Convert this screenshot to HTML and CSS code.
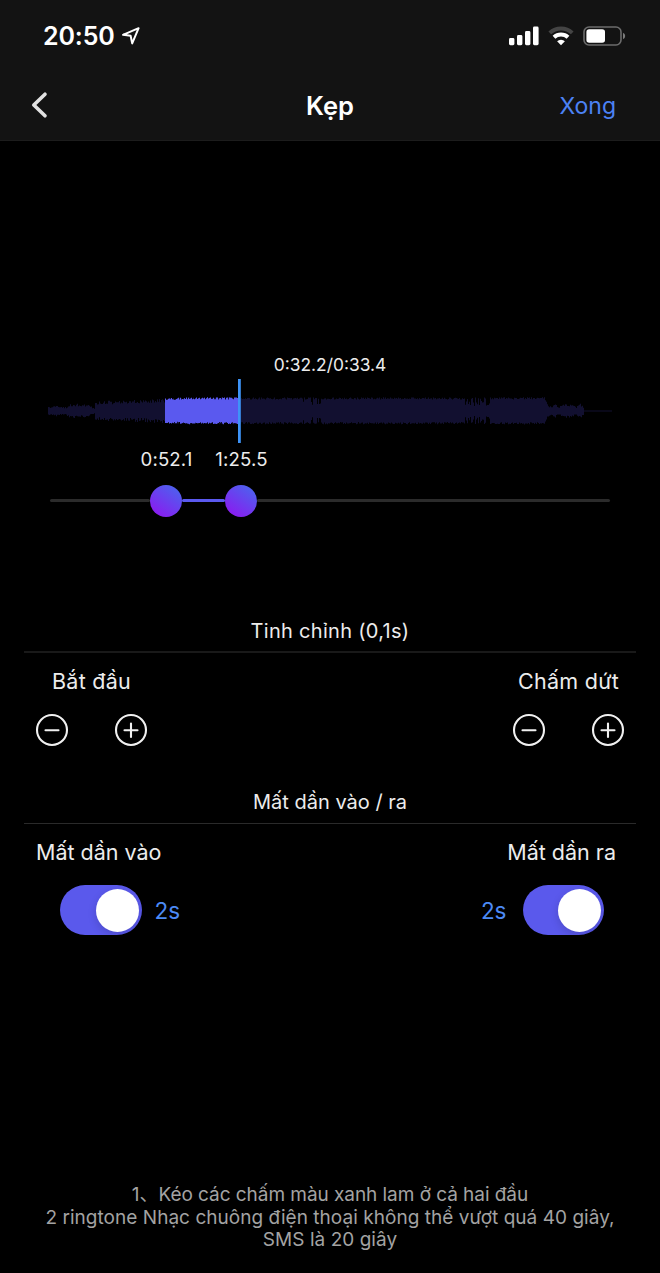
FILE: index.html
```html
<!DOCTYPE html>
<html lang="vi">
	<head>
		<meta charset="utf-8" />
		<meta name="viewport" content="width=device-width" />
		<title>Kẹp</title>
<link rel="stylesheet" href="styles.css">
	</head>
	<body>
		<header class="header">
			<div class="status">
				<span class="clock">20:50</span>
				<svg class="location" width="20" height="20" viewBox="0 0 20 20">
					<path d="M2 8.8 L17.6 2.2 L11.2 17.4 L9.6 9.8 Z" />
				</svg>
				<svg class="signal" width="30" height="20" viewBox="0 0 30 20">
					<rect x="0" y="12" width="5.4" height="7.2" rx="1.4" />
					<rect x="8" y="9" width="5.4" height="10.2" rx="1.4" />
					<rect x="16" y="5" width="5.4" height="14.2" rx="1.4" />
					<rect x="24" y="0.6" width="5.6" height="18.6" rx="1.4" />
				</svg>
				<svg class="wifi" width="26" height="20" viewBox="0 0 26 20">
					<path class="wifi-off" d="M1.8 6.9 A16.2 16.2 0 0 1 24.2 6.9" />
					<path class="wifi-on" d="M6 11.2 A10.2 10.2 0 0 1 20 11.2" />
					<path class="wifi-dot" d="M13 19.2 L9.1 15.3 A5.6 5.6 0 0 1 16.9 15.3 Z" />
				</svg>
				<svg class="battery" width="43" height="20" viewBox="0 0 43 20">
					<rect class="battery-case" x="1" y="1" width="37" height="18" rx="5" />
					<rect class="battery-level" x="3.4" y="3.2" width="18.6" height="13.6" rx="2.8" />
					<path class="battery-cap" d="M40 6.8 Q42.2 7.6 42.2 10 Q42.2 12.4 40 13.2 Z" />
				</svg>
			</div>
			<nav class="navbar">
				<button class="back" aria-label="Quay lại">
					<svg width="18" height="28" viewBox="0 0 18 28">
						<path d="M15 3.2 L3.8 14 L15 24.8" />
					</svg>
				</button>
				<h1>Kẹp</h1>
				<button class="done">Xong</button>
			</nav>
		</header>

		<section class="clip">
			<p class="progress">0:32.2/0:33.4</p>
			<svg id="waveform" class="waveform" width="564" height="64" viewBox="0 0 564 64">
				<path id="wave-rest" class="wave-rest" />
				<path id="wave-selected" class="wave-selected" />
				<rect class="playhead" x="190" y="0" width="2.8" height="64" />
			</svg>
			<div class="times">
				<span>0:52.1</span>
				<span>1:25.5</span>
			</div>
			<div class="slider">
				<i class="track before"></i>
				<i class="handle"></i>
				<i class="track selected"></i>
				<i class="handle"></i>
				<i class="track after"></i>
			</div>
		</section>

		<section class="panel tune">
			<h2>Tinh chỉnh (0,1s)</h2>
			<div class="labels">
				<span>Bắt đầu</span>
				<span>Chấm dứt</span>
			</div>
			<div class="steppers">
				<div class="stepper">
					<svg width="34" height="34" viewBox="0 0 34 34"><circle cx="17" cy="17" r="15" /><path d="M10.5 17.3 H23.5" /></svg>
					<svg width="34" height="34" viewBox="0 0 34 34"><circle cx="17" cy="17" r="15" /><path d="M10.5 17.3 H23.5 M17 10.5 V24" /></svg>
				</div>
				<div class="stepper">
					<svg width="34" height="34" viewBox="0 0 34 34"><circle cx="17" cy="17" r="15" /><path d="M10.5 17.3 H23.5" /></svg>
					<svg width="34" height="34" viewBox="0 0 34 34"><circle cx="17" cy="17" r="15" /><path d="M10.5 17.3 H23.5 M17 10.5 V24" /></svg>
				</div>
			</div>
		</section>

		<section class="panel fade">
			<h2>Mất dần vào / ra</h2>
			<div class="labels">
				<span>Mất dần vào</span>
				<span>Mất dần ra</span>
			</div>
			<div class="switches">
				<div class="switch-row"><i class="switch"></i><span>2s</span></div>
				<div class="switch-row"><span>2s</span><i class="switch"></i></div>
			</div>
		</section>

		<footer class="hint">
			<p><span class="first">1、Kéo các chấm màu xanh lam ở cả hai đầu</span><br>
			2 ringtone Nhạc chuông điện thoại không thể vượt quá 40 giây,<br>
			SMS là 20 giây</p>
		</footer>

<script>
// loudness of the track: [x, half height]
var levels = [
	[0, 4], [3, 4], [8, 5.5], [12, 4], [18, 4], [21, 7], [30, 7], [40, 6],
	[46, 3], [47, 9.5], [60, 10], [80, 10.5], [100, 11.5], [117, 12.5], [140, 13.3],
	[300, 13.3], [420, 13.3], [496, 13.5], [499, 7], [503, 4], [507, 7], [510, 4],
	[515, 7], [523, 7], [528, 4], [532, 8], [536, 3], [541, 7], [546, 3]
];
var seed = 11;

function random() {
	seed = (seed * 16807) % 2147483647;
	return seed / 2147483647;
}

function levelAt(x) {
	for (var i = levels.length - 1; i > 0; i--) {
		if (levels[i - 1][0] <= x && x < levels[i][0]) {
			var a = levels[i - 1], b = levels[i];
			return a[1] + (b[1] - a[1]) * (x - a[0]) / (b[0] - a[0]);
		}
	}
	return 0;
}

function drawWave(id, from, to) {
	var d = '';
	for (var x = from; x < to; x++) {
		var h = 0.6, low = 0.6;
		if (x < 536) {
			// the intro and the outro are rougher than the middle
			var rough = x < 117 || x > 498 ? 0.36 : 0.17;
			h = levelAt(x) * (1.03 - random() * rough);
			low = levelAt(x) * (1 - random() * rough);
			// quieter bars with thin gaps between them
			var gaps = (x > 254 && x < 273) || (x > 416 && x < 442);
			if (gaps && random() < 0.4)
				h = low = 5 + random() * 5;
		}
		d += 'M' + x + ' ' + (32 - h).toFixed(1) + 'h1V' + (32 + low).toFixed(1) + 'h-1z';
	}
	document.getElementById(id).setAttribute('d', d);
}

drawWave('wave-rest', 0, 564);
drawWave('wave-selected', 117, 191);
</script>
	</body>
</html>
```
FILE: styles.css
```css
* {
	box-sizing: border-box;
}
body {
	margin: 0;
	height: 1273px;
	background: #000;
	color: #ececec;
	font-family: Inter, "Noto Sans CJK SC", sans-serif;
	overflow: hidden;
}
h1, h2, p {
	margin: 0;
	font-weight: 400;
}
button {
	padding: 0;
	border: 0;
	background: none;
	font: inherit;
}
svg, i {
	display: block;
	flex: none;
}
.header {
	height: 141px;
	background: #131313;
	border-bottom: 1px solid #1c1c1c;
}
.status {
	display: flex;
	height: 70px;
	padding: 2px 34px 0 43px;
	align-items: center;
}
.clock {
	width: 77px;
	color: #fff;
	font-size: 25px;
	font-weight: 600;
	letter-spacing: -.1px;
	white-space: nowrap;
}
.location {
	margin-left: 1px;
	fill: none;
	stroke: #fff;
	stroke-width: 2;
	stroke-linejoin: round;
}
.signal {
	margin-left: auto;
	fill: #fff;
}
.wifi {
	margin-left: 9px;
}
.wifi-off, .wifi-on {
	fill: none;
	stroke: #444;
	stroke-width: 4;
}
.wifi-on {
	stroke: #fff;
}
.wifi-dot {
	fill: #fff;
}
.battery {
	margin-left: 9px;
}
.battery-case {
	fill: none;
	stroke: #6c6c6c;
	stroke-width: 1.6;
}
.battery-level {
	fill: #fff;
}
.battery-cap {
	fill: #7a7a7a;
}
.navbar {
	display: grid;
	grid-template-columns: 1fr auto 1fr;
	height: 70px;
	padding: 0 44px 0 30px;
	align-items: center;
}
.back path {
	fill: none;
	stroke: #e2e2e2;
	stroke-width: 3.6;
	stroke-linecap: round;
	stroke-linejoin: round;
}
.navbar h1 {
	margin-left: 14px;
	color: #fff;
	font-size: 25.5px;
	font-weight: 600;
}
.done {
	justify-self: end;
	padding-top: 1px;
	color: #4c82f5;
	font-size: 23px;
}
.clip {
	height: 468px;
	padding: 212px 48px 0;
}
.progress {
	font-size: 17.4px;
	line-height: 24px;
	text-align: center;
}
.waveform {
	margin-top: 2px;
}
.wave-rest {
	fill: #121030;
}
.wave-selected {
	fill: #5a59ef;
}
.playhead {
	fill: #3d93f7;
}
.times {
	display: flex;
	margin-top: 4px;
	padding-left: 81px;
	font-size: 18.6px;
	line-height: 24px;
	letter-spacing: .15px;
}
.times span {
	width: 75px;
	text-align: center;
}
.slider {
	display: flex;
	align-items: center;
	height: 33px;
	margin: 13px 2px 0;
}
.track {
	height: 3px;
	border-radius: 2px;
	background: #2b2b2b;
}
.track.before {
	width: 100px;
}
.track.selected {
	width: 43px;
	background: #5a59ef;
}
.track.after {
	flex: 1;
}
.handle {
	width: 32px;
	height: 32px;
	border-radius: 50%;
	background: linear-gradient(35deg, #8a1cf0 12%, #4a64ee 92%);
}
.panel {
	padding: 0 24px;
}
.panel h2 {
	height: 44px;
	border-bottom: 2px solid #191919;
	font-size: 20px;
	line-height: 44px;
	text-align: center;
}
.labels {
	display: flex;
	justify-content: space-between;
	font-size: 21.5px;
	line-height: 30px;
}
.tune {
	height: 171px;
}
.tune h2 {
	letter-spacing: .3px;
}
.tune .labels {
	padding: 13px 17px 0 28px;
	letter-spacing: .25px;
}
.steppers {
	display: flex;
	justify-content: space-between;
	padding: 17px 11px 0 10.5px;
}
.stepper {
	display: flex;
	gap: 45.5px;
}
.stepper svg {
	fill: none;
	stroke: #f0f0f0;
	stroke-width: 2.1;
	stroke-linecap: round;
}
.fade h2 {
	border-bottom: 1px solid #2a2a2a;
}
.fade .labels {
	padding: 13px 20px 0 12px;
}
.switches {
	display: flex;
	justify-content: space-between;
	padding: 18px 32px 0 36px;
}
.switch-row {
	display: flex;
	align-items: center;
	gap: 13px;
	color: #4c8af5;
	font-size: 22.5px;
}
.switch-row span {
	padding-top: 1px;
}
.switch-row span:first-child {
	margin-right: 3px;
}
.switch {
	display: flex;
	justify-content: flex-end;
	align-items: center;
	width: 81.5px;
	height: 50px;
	padding-right: 3px;
	border-radius: 25px;
	background: #5a59ec;
}
.switch::after {
	content: "";
	width: 43px;
	height: 43px;
	border-radius: 50%;
	background: #fff;
	box-shadow: 0 3px 8px rgba(0, 0, 0, .15);
}
.hint {
	padding-top: 249px;
	color: #a3a3a3;
	font-size: 19px;
	line-height: 22.5px;
	letter-spacing: .04px;
	text-align: center;
	white-space: nowrap;
}
.hint .first {
	letter-spacing: -.05px;
}
```
